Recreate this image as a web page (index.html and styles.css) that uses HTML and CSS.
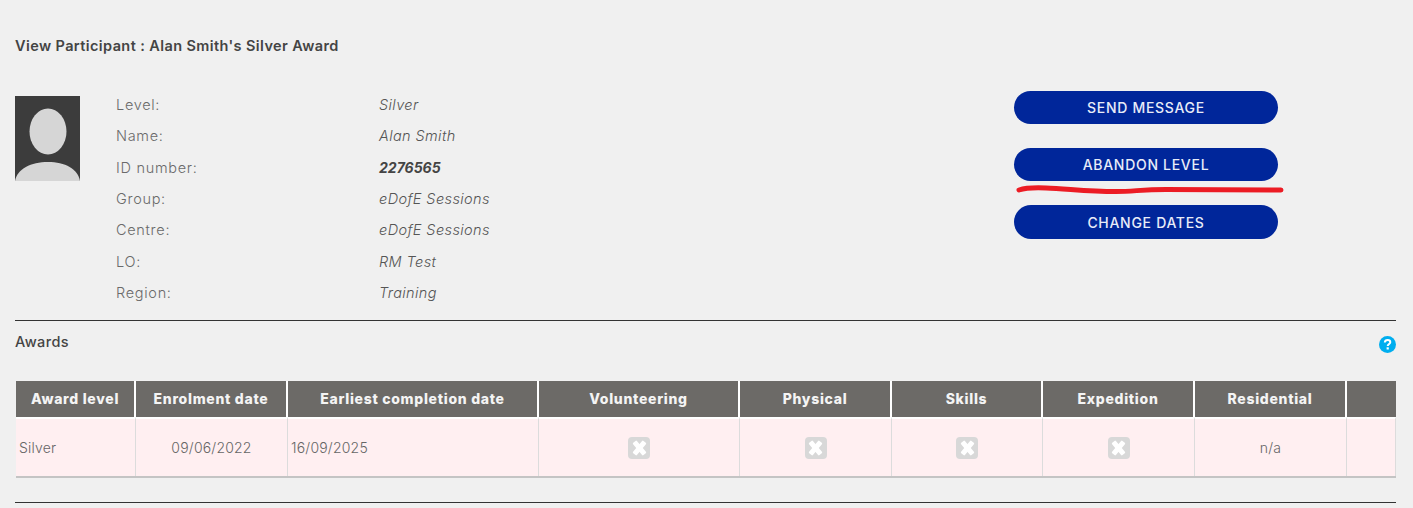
FILE: index.html
```html
<!DOCTYPE html>
<html lang="en">
<head>
<meta charset="utf-8">
<title>View Participant</title>
<link rel="stylesheet" href="styles.css">
</head>
<body>
<main class="page">
  <h1 class="title">View Participant : Alan Smith's Silver Award</h1>
  <section class="profile">
    <svg class="avatar" viewBox="0 0 65 85" aria-hidden="true">
      <rect width="65" height="85" fill="#3c3c3c"/>
      <ellipse cx="33" cy="35.500" rx="18.500" ry="23" fill="#d6d6d6"/>
      <path d="M0 85C2 73 16 66 33 66S63 73 65 85Z" fill="#d6d6d6"/>
    </svg>
    <dl class="details">
      <div class="detail"><dt>Level:</dt><dd>Silver</dd></div>
      <div class="detail"><dt>Name:</dt><dd>Alan Smith</dd></div>
      <div class="detail"><dt>ID number:</dt><dd class="strong">2276565</dd></div>
      <div class="detail"><dt>Group:</dt><dd>eDofE Sessions</dd></div>
      <div class="detail"><dt>Centre:</dt><dd>eDofE Sessions</dd></div>
      <div class="detail"><dt>LO:</dt><dd>RM Test</dd></div>
      <div class="detail"><dt>Region:</dt><dd>Training</dd></div>
    </dl>
    <div class="actions">
      <button class="btn" type="button">SEND MESSAGE</button>
      <button class="btn" type="button">ABANDON LEVEL</button>
      <button class="btn" type="button">CHANGE DATES</button>
      <svg class="scribble" viewBox="0 0 268 10" aria-hidden="true">
        <path d="M3 5C9 3 18 2.500 30 3C50 3.500 70 6.500 100 6.500C118 6.500 125 4.500 150 4.500C190 4.500 230 5 265 5" fill="none" stroke="#ec1c24" stroke-width="5" stroke-linecap="round"/>
      </svg>
    </div>
  </section>
  <section class="awards">
    <div class="awards-head">
      <h2 class="awards-title">Awards</h2>
      <svg class="help" viewBox="0 0 17 17" aria-hidden="true">
        <circle cx="8.500" cy="8.500" r="8.500" fill="#00aeef"/>
        <path d="M5.800 6.500C5.900 4.900 7 4 8.600 4C10.200 4 11.300 4.900 11.300 6.200C11.300 7.900 8.900 8 8.700 10" fill="none" stroke="#fff" stroke-width="2"/>
        <rect x="7.600" y="11.300" width="2.200" height="2.200" fill="#fff"/>
      </svg>
    </div>
    <table class="table">
      <colgroup>
        <col class="c1"><col class="c2"><col class="c3"><col class="c4"><col class="c5"><col class="c6"><col class="c7"><col class="c8"><col class="c9">
      </colgroup>
      <thead>
        <tr><th>Award level</th><th>Enrolment date</th><th>Earliest completion date</th><th>Volunteering</th><th>Physical</th><th>Skills</th><th>Expedition</th><th>Residential</th><th></th></tr>
      </thead>
      <tbody>
        <tr>
          <td class="left">Silver</td>
          <td>09/06/2022</td>
          <td class="left">16/09/2025</td>
          <td><span class="x"></span></td>
          <td><span class="x"></span></td>
          <td><span class="x"></span></td>
          <td><span class="x"></span></td>
          <td>n/a</td>
          <td></td>
        </tr>
      </tbody>
    </table>
  </section>
  <hr class="rule">
</main>
</body>
</html>
```
FILE: styles.css
```css
* { box-sizing: border-box; }
html, body { margin: 0; height: 100%; }
body {
  background: #f0f0f0;
  color: #4a4a4a;
  font-family: "Inter", "DejaVu Sans", sans-serif;
  font-size: 14px;
  overflow: hidden;
}
.page { padding: 37px 17px 0 15px; }
.title { margin: 0; font-size: 14.500px; letter-spacing: 0.400px; line-height: 18px; font-weight: 600; color: #444; }
.profile { position: relative; display: flex; margin-top: 41px; height: 225px; border-bottom: 1px solid #333; }
.avatar { width: 65px; height: 85px; flex: none; }
.details { margin: -7px 0 0 36px; width: 520px; }
.detail { display: flex; height: 31.300px; align-items: center; }
.detail dt { width: 263px; color: #6a6a6a; font-weight: 300; font-size: 14.500px; letter-spacing: 0.700px; }
.detail dd { margin: 0; font-style: italic; color: #555; font-weight: 300; letter-spacing: 0.400px; font-size: 14.500px; }
.detail dd.strong { font-weight: 700; color: #444; font-size: 14px; letter-spacing: 0; }
.actions { position: relative; display: flex; flex-direction: column; gap: 24px; margin-left: 378px; margin-top: -5px; width: 264px; }
.btn { height: 33px; border: 0; border-radius: 17px; background: #00269a; color: #e8ecf8; font: 500 14px "Inter", sans-serif; letter-spacing: 0.700px; }
.btn:last-of-type { height: 34px; }
.scribble { position: absolute; left: 2px; top: 94px; width: 268px; height: 10px; }
.awards-head { display: flex; justify-content: space-between; padding-top: 15px; height: 60px; }
.awards-title { margin: 0; font-size: 14.500px; letter-spacing: 0.400px; line-height: 12px; font-weight: 500; color: #444; }
.help { width: 17px; height: 17px; }
.table { width: 1380px; margin-left: 1px; table-layout: fixed; border-collapse: separate; border-spacing: 0; box-shadow: 0 2px 0 #c4c4c4; background: #ffeff1; }
.c1 { width: 120px; } .c2 { width: 152px; } .c3 { width: 251px; } .c4 { width: 201px; }
.c5 { width: 152px; } .c6 { width: 151px; } .c7 { width: 152px; } .c8 { width: 152px; } .c9 { width: 49px; }
.table th { height: 36px; padding: 0 0 2px; background: #6c6a67; color: #f4f4f4; font-size: 14px; letter-spacing: 0.700px; font-weight: 800; border-right: 2px solid #fff; }
.table th:last-child { border-right: 0; }
.table td { height: 59px; padding: 0; text-align: center; color: #666; font-weight: 300; letter-spacing: 0.200px; border-top: 2px solid #fff; border-right: 1px solid #dcdcdc; vertical-align: middle; }
.table td.left { text-align: left; padding-left: 3px; }
.x { display: inline-block; position: relative; width: 22px; height: 22px; border-radius: 4px; background: #d8d8d8; vertical-align: middle; }
.x::before, .x::after { content: ""; position: absolute; left: 8.500px; top: 3px; width: 5px; height: 16px; background: #fff; border-radius: 1px; }
.x::before { transform: rotate(40deg); }
.x::after { transform: rotate(-40deg); }
.rule { margin: 26px 0 0; border: 0; border-top: 1px solid #333; }
```
